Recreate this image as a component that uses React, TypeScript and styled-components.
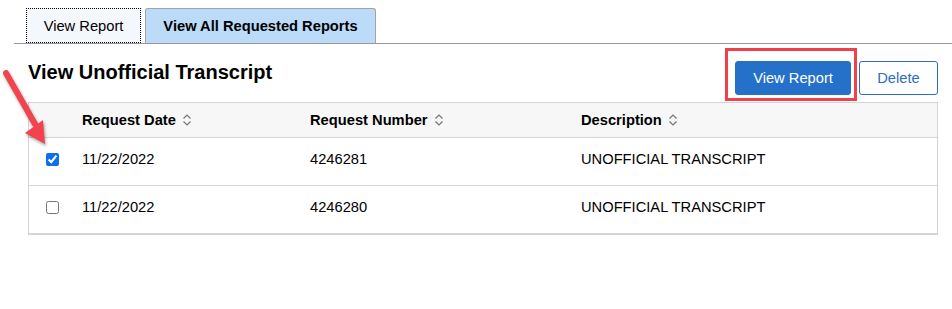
import { FC } from 'react';
import styled, { createGlobalStyle } from 'styled-components';

const GlobalStyle = createGlobalStyle`
	body {
		margin: 0;
		background: #ffffff;
		font-family: 'Liberation Sans', Arial, sans-serif;
		color: #000000;
	}
`;

type Row = { id: string; date: string; number: string; description: string; checked: boolean };

const rows: Row[] = [
	{ id: 'a', date: '11/22/2022', number: '4246281', description: 'UNOFFICIAL TRANSCRIPT', checked: true },
	{ id: 'b', date: '11/22/2022', number: '4246280', description: 'UNOFFICIAL TRANSCRIPT', checked: false },
];

const SortIcon: FC = () => (
	<SortSvg width="10" height="12" viewBox="0 0 10 12">
		<path d="M1.5 4.5 L5 1 L8.5 4.5" />
		<path d="M1.5 7.5 L5 11 L8.5 7.5" />
	</SortSvg>
);

const Arrow: FC = () => (
	<ArrowSvg width="60" height="90" viewBox="0 0 60 90">
		<line x1="6" y1="13" x2="35" y2="64" />
		<polygon points="45,84 25,73 43,60" />
	</ArrowSvg>
);

const App: FC = () => (
	<>
		<GlobalStyle />
		<Page>
			<Arrow />
			<TabBar>
				<Tab $focused>View Report</Tab>
				<Tab $active>View All Requested Reports</Tab>
			</TabBar>
			<Content>
				<HeaderBar>
					<Title>View Unofficial Transcript</Title>
					<Actions>
						<Highlight>
							<PrimaryButton>View Report</PrimaryButton>
						</Highlight>
						<SecondaryButton>Delete</SecondaryButton>
					</Actions>
				</HeaderBar>
				<Table>
					<HeadRow>
						<Cell />
						<HeadCell>
							Request Date <SortIcon />
						</HeadCell>
						<HeadCell>
							Request Number <SortIcon />
						</HeadCell>
						<HeadCell>
							Description <SortIcon />
						</HeadCell>
					</HeadRow>
					{rows.map((row) => (
						<BodyRow key={row.id}>
							<CheckCell>
								<Checkbox type="checkbox" defaultChecked={row.checked} />
							</CheckCell>
							<Cell>{row.date}</Cell>
							<Cell>{row.number}</Cell>
							<Cell>{row.description}</Cell>
						</BodyRow>
					))}
				</Table>
			</Content>
		</Page>
	</>
);

const Page = styled.div`
	position: relative;
	width: 952px;
	height: 309px;
	padding-top: 8px;
	box-sizing: border-box;
`;

const ArrowSvg = styled.svg`
	position: absolute;
	left: 0;
	top: 60px;
	filter: drop-shadow(1px 2px 1.5px rgba(0, 0, 0, 0.35));

	line {
		stroke: #f2434e;
		stroke-width: 6;
		stroke-linecap: round;
	}

	polygon {
		fill: #f2434e;
	}
`;

const TabBar = styled.div`
	display: flex;
	gap: 4px;
	margin-left: 14px;
	padding-left: 12px;
	border-bottom: 1px solid #999999;
	height: 35px;
`;

const Tab = styled.div<{ $active?: boolean; $focused?: boolean }>`
	display: flex;
	align-items: center;
	justify-content: center;
	box-sizing: border-box;
	height: 35px;
	padding: 0 12px;
	font-size: 14.7px;
	font-weight: ${(p) => (p.$active ? 700 : 400)};
	color: #000000;
	background: ${(p) => (p.$active ? '#bbdbf8' : '#f4f8fc')};
	border: ${(p) => (p.$focused ? '1px dotted #000000' : '1px solid #a3a3a3')};
	border-bottom: ${(p) => (p.$focused ? '1px dotted #000000' : 'none')};
	border-radius: ${(p) => (p.$active ? '3px 3px 0 0' : '0')};
	width: ${(p) => (p.$active ? '231px' : '115px')};
`;

const Content = styled.div`
	padding: 4px 14px 0 28px;
`;

const HeaderBar = styled.div`
	display: flex;
	justify-content: space-between;
	align-items: flex-start;
	height: 54px;
`;

const Title = styled.h1`
	margin: 13px 0 0;
	font-size: 20px;
	line-height: 22px;
	font-weight: 700;
`;

const Actions = styled.div`
	display: flex;
	align-items: flex-start;
`;

const Highlight = styled.div`
	border: 3px solid #f0414a;
	padding: 10px 3px 3px 7px;
`;

const ButtonBase = styled.button`
	box-sizing: border-box;
	height: 34px;
	padding: 0;
	border-radius: 3px;
	font-family: 'Liberation Sans', Arial, sans-serif;
	font-size: 14.7px;
	cursor: pointer;
`;

const PrimaryButton = styled(ButtonBase)`
	width: 116px;
	background: #2571c9;
	border: 1px solid #2571c9;
	color: #ffffff;
`;

const SecondaryButton = styled(ButtonBase)`
	width: 79px;
	margin: 13px 0 0 2px;
	background: #ffffff;
	border: 1px solid #2d6dc9;
	color: #2d6dc4;
`;

const Table = styled.div`
	border: 1px solid #d1d5da;
	border-bottom-width: 2px;
`;

const RowBase = styled.div`
	display: grid;
	grid-template-columns: 53px 228px 271px 1fr;
	align-items: center;
	box-sizing: border-box;
`;

const HeadRow = styled(RowBase)`
	height: 35px;
	padding-bottom: 1px;
	background: #f7f7f7;
	border-bottom: 1px solid #d1d5da;
`;

const BodyRow = styled(RowBase)`
	height: 47px;
	padding-bottom: 5px;

	& + & {
		height: 48px;
		border-top: 1px solid #d1d5da;
	}
`;

const Cell = styled.div`
	font-size: 14.7px;
	color: #000000;
`;

const HeadCell = styled(Cell)`
	display: flex;
	align-items: center;
	gap: 6px;
	font-weight: 700;
`;

const CheckCell = styled(Cell)`
	display: flex;
	padding-left: 17px;
`;

const Checkbox = styled.input`
	margin: 0;
	width: 13px;
	height: 13px;
	accent-color: #0b6ff0;
`;

const SortSvg = styled.svg`
	path {
		fill: none;
		stroke: #777777;
		stroke-width: 1.2;
	}
`;

export default App;
